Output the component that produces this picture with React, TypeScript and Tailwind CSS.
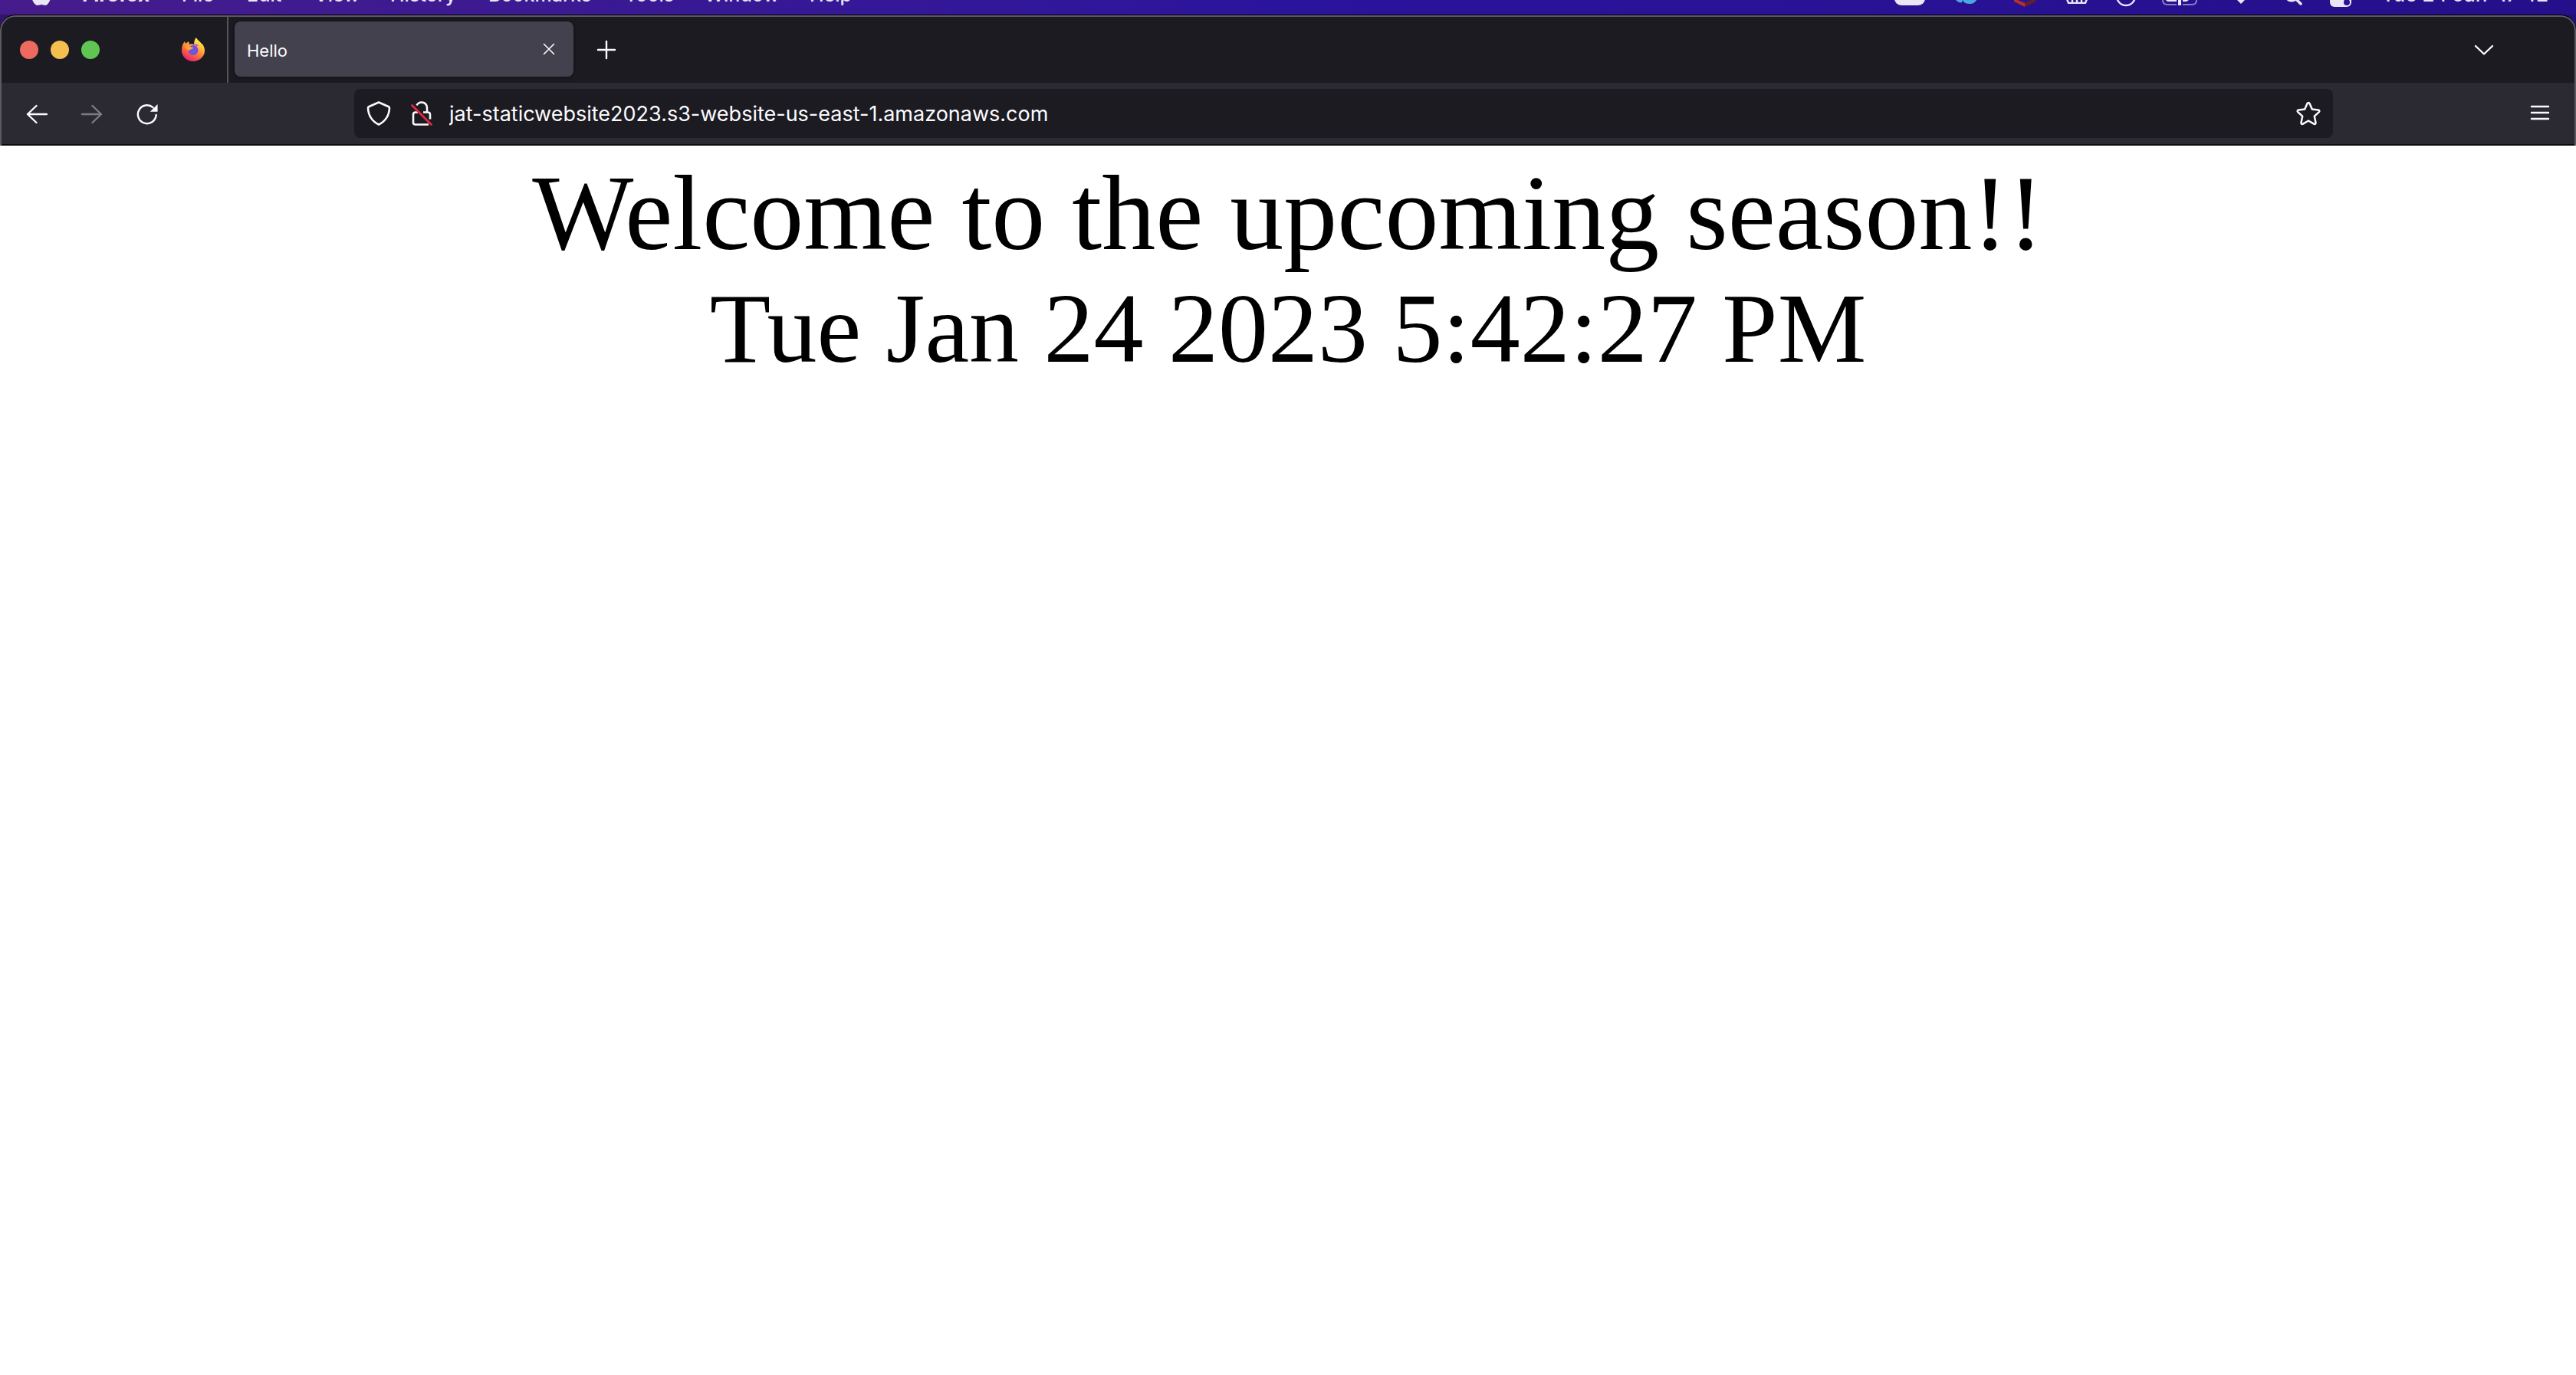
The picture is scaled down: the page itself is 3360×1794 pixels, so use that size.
import type { ReactNode } from "react";

function Svg({ children, className, viewBox }: { children: ReactNode; className: string; viewBox: string }) {
  return (
    <svg className={className} viewBox={viewBox} fill="none" stroke="currentColor" aria-hidden="true">
      {children}
    </svg>
  );
}

const menus = [
  { name: "Firefox", style: "w-[130px] text-[26px] font-bold" },
  { name: "File", style: "w-[85px] text-[25px] font-medium" },
  { name: "Edit", style: "w-[88px] text-[25px] font-medium" },
  { name: "View", style: "w-[99px] text-[25px] font-medium" },
  { name: "History", style: "w-[128px] text-[25px] font-medium" },
  { name: "Bookmarks", style: "w-[178px] text-[25px] font-medium" },
  { name: "Tools", style: "w-[104px] text-[25px] font-medium" },
  { name: "Window", style: "w-[137px] text-[25px] font-medium" },
  { name: "Help", style: "w-[80px] text-[25px] font-medium" },
];

function StatusIcons() {
  return (
    <div className="ml-auto flex shrink-0 items-end">
      <Svg className="mb-3 h-8 w-10" viewBox="0 0 40 32">
        <rect width="40" height="32" rx="9" fill="currentColor" stroke="none" />
      </Svg>
      <Svg className="mb-3.5 ml-10 h-8 w-7" viewBox="0 0 28 32">
        <path d="M0 27c3 3 6 4 8 3l1-3c1 4 5 5 10 5 5 0 9-4 9-9V10H0z" fill="#4aa8e0" stroke="none" />
      </Svg>
      <Svg className="mb-2.5 ml-12 h-8 w-7" viewBox="0 0 28 32">
        <path d="M0 10h14v22L0 25z" fill="#b9302b" stroke="none" />
        <path d="M28 10H14v22l14-7z" fill="#6b1f1f" stroke="none" />
        <path d="M0 10h28v11l-14 6-14-6z" fill="#2b149c" stroke="none" />
      </Svg>
      <Svg className="mb-3.5 ml-10 h-8 w-7" viewBox="0 0 28 32">
        <path d="M1 26l2 5h22l2-5M8 26v5M14 26v5M20 26v5" strokeWidth="2.400" />
      </Svg>
      <Svg className="mb-2.5 ml-9 h-7 w-7" viewBox="0 0 28 28">
        <circle cx="14" cy="14" r="12" strokeWidth="2.400" />
      </Svg>
      <Svg className="mb-3 ml-8 h-6 w-12" viewBox="0 0 48 24">
        <path d="M2 4v13c0 4 2 6 6 6h12M28 23h12c4 0 6-2 6-6V4" strokeWidth="2" opacity="0.5" />
        <path d="M6 8h14v11H10c-3 0-4-1-4-4zM28 8h8v9l-3 2h-5zM22 12h4v12h-4z" fill="currentColor" stroke="none" />
      </Svg>
      <Svg className="mb-3.5 ml-10 h-6 w-8" viewBox="0 0 32 24">
        <path d="M10 18c4-3 8-3 12 0l-6 6z" fill="currentColor" stroke="none" />
      </Svg>
      <Svg className="mb-3 ml-10 size-6" viewBox="0 0 24 24">
        <circle cx="10" cy="10" r="8" strokeWidth="3" />
        <path d="M16 16l6 6" strokeWidth="3.500" strokeLinecap="round" />
      </Svg>
      <Svg className="mb-2.5 ml-9 h-6 w-7" viewBox="0 0 28 24">
        <rect y="10" width="28" height="14" rx="6" fill="currentColor" stroke="none" />
        <circle cx="22" cy="18" r="4" fill="#2a1296" stroke="none" />
      </Svg>
    </div>
  );
}

function MenuBar() {
  return (
    <header className="flex h-[19px] items-end overflow-hidden bg-linear-to-r from-[#461b8c] via-[#2b149c] to-[#260f8a] pr-9 pl-10 leading-8 text-[#ebe6f5]">
      <Svg className="mb-[11px] h-8 w-[27px] shrink-0" viewBox="0 0 27 32">
        <path
          d="M13 9C9 7 1 8 1 17c0 7 4 14 8 14 2 0 3-1 5-1s3 1 5 1c3 0 6-5 7-9-6-3-5-10-1-12-3-4-8-3-12-1z"
          fill="currentColor"
          stroke="none"
        />
      </Svg>
      <nav className="mb-2.5 ml-10 flex">
        {menus.map((m) => (
          <button key={m.name} className={"shrink-0 text-left leading-8 " + m.style}>
            {m.name}
          </button>
        ))}
      </nav>
      <StatusIcons />
      <time className="mb-2.5 ml-10 shrink-0 text-[26px] leading-8 font-medium whitespace-pre">Tue 24 Jan  17:42</time>
    </header>
  );
}

function FirefoxLogo() {
  return (
    <svg className="h-8 w-8" viewBox="0 0 32 32" aria-hidden="true">
      <defs>
        <linearGradient id="flame" x1="0.8" y1="0.1" x2="0.3" y2="1">
          <stop offset="0" stopColor="#fff04f" />
          <stop offset="0.35" stopColor="#ffae38" />
          <stop offset="0.7" stopColor="#fb5a44" />
          <stop offset="1" stopColor="#e0217a" />
        </linearGradient>
        <radialGradient id="globe" cx="0.5" cy="0.6" r="0.6">
          <stop offset="0" stopColor="#5568d8" />
          <stop offset="1" stopColor="#8a3fdc" />
        </radialGradient>
      </defs>
      <path
        d="M20 0c1 3 5 5 7 8 2 1 4 5 4 9 0 8-7 14-15 14S1 25 1 17c0-5 1-9 4-12l1 3 4-3 1 4c3-1 5 0 6 0 0-4 1-7 3-9z"
        fill="url(#flame)"
      />
      <circle cx="16" cy="16.500" r="6.500" fill="url(#globe)" />
      <path d="M16 9c3-1 6 0 8 2-2-1-3 0-3 1-1-2-3-2-5-3z" fill="#9059ff" />
      <path d="M5 12c4-3 6 0 11 1 0 2-4 2-5 4-2-1-4-2-6-5z" fill="#ffa436" />
    </svg>
  );
}

function TabStrip() {
  return (
    <div className="flex h-[86px] items-stretch">
      <div className="flex w-[294px] shrink-0 items-center pl-6">
        <div className="flex gap-4">
          <button aria-label="Close window" className="size-6 rounded-full bg-[#ed6a5e]" />
          <button aria-label="Minimise window" className="size-6 rounded-full bg-[#f5bf4f]" />
          <button aria-label="Zoom window" className="size-6 rounded-full bg-[#61c554]" />
        </div>
        <button aria-label="Firefox View" className="ml-[106px]">
          <FirefoxLogo />
        </button>
      </div>
      <div className="w-0.5 shrink-0 bg-[#55545b]" />
      <div className="mt-1.5 mb-2 ml-2 flex w-[442px] shrink-0 items-center justify-between rounded-lg bg-[#42414d] pr-6 pl-4 shadow-[0_0_6px_rgba(0,0,0,0.5)]">
        <span className="mt-1 text-[22px] leading-7">Hello</span>
        <button aria-label="Close tab">
          <Svg className="size-4" viewBox="0 0 16 16">
            <path d="M1.500 1.500l13 13M14.500 1.500l-13 13" strokeWidth="1.600" strokeLinecap="round" />
          </Svg>
        </button>
      </div>
      <button aria-label="New tab" className="ml-[30px]">
        <Svg className="size-[26px]" viewBox="0 0 26 26">
          <path d="M13 2v22M2 13h22" strokeWidth="2.400" strokeLinecap="round" />
        </Svg>
      </button>
      <button aria-label="List all tabs" className="mr-[105px] ml-auto">
        <Svg className="h-4 w-[26px]" viewBox="0 0 26 16">
          <path d="M2 3l11 10.500L24 3" strokeWidth="2.400" strokeLinecap="round" strokeLinejoin="round" />
        </Svg>
      </button>
    </div>
  );
}

const arrow = "M27 14H2M13.500 3L2 14l11.500 11";

function Toolbar() {
  return (
    <div className="flex h-[82px] items-center border-b-2 border-[#0c0c0d] bg-[#2b2a33] pr-8 pl-8">
      <div className="mt-0.5 flex gap-11">
        <button aria-label="Back">
          <Svg className="size-7" viewBox="0 0 28 28">
            <path d={arrow} strokeWidth="2.400" strokeLinecap="round" strokeLinejoin="round" />
          </Svg>
        </button>
        <button aria-label="Forward" disabled className="text-[#7d7c83]">
          <Svg className="size-7 rotate-180" viewBox="0 0 28 28">
            <path d={arrow} strokeWidth="2.400" strokeLinecap="round" strokeLinejoin="round" />
          </Svg>
        </button>
        <button aria-label="Reload">
          <Svg className="size-7" viewBox="0 0 30 30">
            <path d="M27.500 16A12.750 12.750 0 1 1 23 5.500" strokeWidth="2.600" strokeLinecap="round" />
            <path d="M29.500 1v10.500h-10.500z" fill="currentColor" stroke="none" />
          </Svg>
        </button>
      </div>
      <div className="ml-64 flex h-16 flex-1 items-center rounded-lg bg-[#1c1b22] pr-4 pl-4">
        <button aria-label="Tracking protection">
          <Svg className="size-8" viewBox="0 0 32 32">
            <path
              d="M16 1.500L28.500 7c1 .500 1.500 1 1.500 2-.500 10-5 17-14 21.500C7 26 2.500 19 2 9c0-1 .500-1.500 1.500-2z"
              strokeWidth="2.600"
              strokeLinejoin="round"
            />
          </Svg>
        </button>
        <button aria-label="Connection is not secure" className="ml-[26px]">
          <Svg className="h-8 w-7" viewBox="0 0 28 32">
            <path
              d="M7.500 5.500C9 2.500 12 1.500 14 1.500c4 0 7 3 7 7v6M16 14.500h6c2 0 3 1 3 3v6M9 14.500H6c-2 0-3 1-3 3V28c0 2 1 2.500 3 2.500h17"
              strokeWidth="2.600"
            />
            <path d="M1.500 5.500l25 25" stroke="#e22840" strokeWidth="2.800" strokeLinecap="round" />
          </Svg>
        </button>
        <input
          aria-label="Address"
          defaultValue="jat-staticwebsite2023.s3-website-us-east-1.amazonaws.com"
          className="mt-0.5 ml-[22px] min-w-0 flex-1 bg-transparent text-[27px] leading-8 outline-none"
        />
        <button aria-label="Bookmark this page">
          <Svg className="size-8" viewBox="0 0 32 32">
            <path
              d="M14.500 3c.600-1.300 2.400-1.300 3 0l3.300 7.600 8 .800c1.500.200 2 1.800 1 2.800l-6 5.500 1.700 8.300c.300 1.500-1.100 2.400-2.400 1.700L16 25.500l-7.100 4.200c-1.300.700-2.700-.200-2.400-1.700l1.700-8.300-6-5.500c-1-1-.500-2.600 1-2.800l8-.800z"
              strokeWidth="2.500"
              strokeLinejoin="round"
            />
          </Svg>
        </button>
      </div>
      <button aria-label="Open application menu" className="ml-[257px]">
        <Svg className="h-6 w-[26px]" viewBox="0 0 26 24">
          <path d="M2 3h22M2 11h22M2 19h22" strokeWidth="2.400" strokeLinecap="round" />
        </Svg>
      </button>
    </div>
  );
}

export default function App() {
  return (
    <div className="min-h-screen bg-white font-['Inter',sans-serif] text-[#fbfbfe]">
      <MenuBar />
      <div className="bg-linear-to-r from-[#34146a] to-[#240e70]">
        <section className="overflow-hidden rounded-t-[20px] border-t border-black bg-[#1c1b22]">
          <div className="overflow-hidden rounded-t-[20px] border-x-2 border-t-2 border-[#5b5a5f]">
            <TabStrip />
            <Toolbar />
          </div>
        </section>
      </div>
      <main className="pt-2.5 text-center font-['Liberation_Serif',serif] text-black">
        <h1 className="text-[140px] leading-[156px]">Welcome to the upcoming season!!</h1>
        <p className="text-[130px] leading-[144px]">Tue Jan 24 2023 5:42:27 PM</p>
      </main>
    </div>
  );
}
